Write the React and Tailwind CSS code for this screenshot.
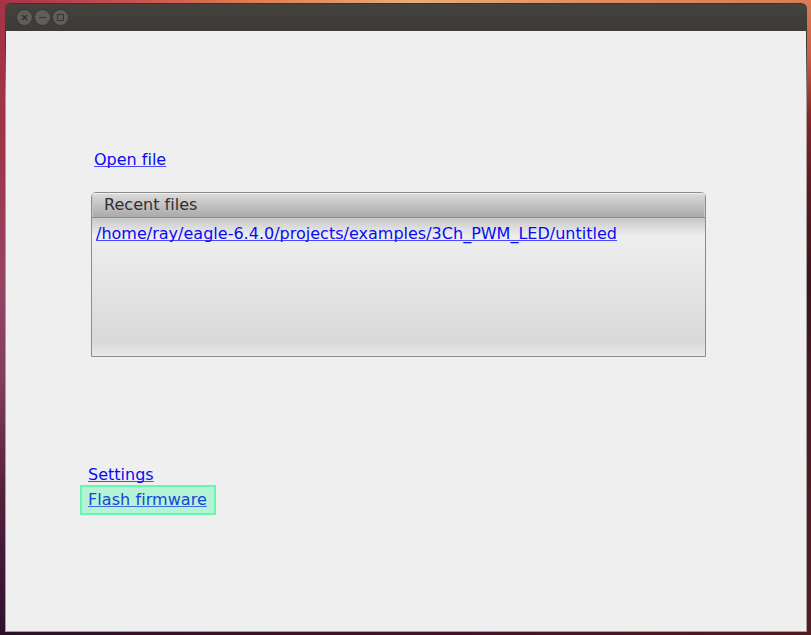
import React from 'react';

const linkBase =
  'block w-fit whitespace-nowrap underline decoration-1 underline-offset-[1px] [text-decoration-skip-ink:none]';
const link = `${linkBase} text-[#0a0af4] decoration-[#4b4bf5]`;

function WindowButton({ children }) {
  return (
    <span className="flex h-[15px] w-[15px] items-center justify-center rounded-full bg-[#5f5e59] shadow-[0_0_0_1px_#3a3934]">
      <svg width="15" height="15" viewBox="0 0 15 15" fill="none" stroke="#363530" strokeWidth="1">
        {children}
      </svg>
    </span>
  );
}

function TitleBar() {
  return (
    <header className="flex h-[28px] shrink-0 items-start gap-[3px] rounded-t-[6px] border-t border-[#35342f] bg-linear-to-b from-[#43423d] to-[#3c3b37] pt-[6px] pl-[12px]">
      <WindowButton>
        <path d="M5 5l5 5M10 5l-5 5" strokeWidth="1.7" />
      </WindowButton>
      <WindowButton>
        <path d="M4 7.5h7" />
      </WindowButton>
      <WindowButton>
        <path d="M4.5 4.5h6v6h-6z" />
      </WindowButton>
    </header>
  );
}

function RecentFiles() {
  return (
    <section className="mt-[21px] ml-[85px] flex h-[165px] w-[615px] flex-col rounded-t-[5px] border border-[#8c8c8c]">
      <h2 className="h-[25px] shrink-0 rounded-t-[4px] border-b border-[#8c8c8c] bg-linear-to-b from-[#dcdcdc] to-[#aaaaaa] pl-[12px] leading-[23px] tracking-[0.03px] text-[#303030] shadow-[inset_0_1px_0_#f0f0f0,inset_1px_0_0_#c8c8c8,inset_-1px_0_0_#c8c8c8]">
        Recent files
      </h2>
      <div className="grow bg-[linear-gradient(to_bottom,#c8c8c8_0%,#eeeeee_13%,#d9d9d9_89%,#e8e8e8_100%)] pt-[6px] pl-[4px]">
        <a className={`${link} tracking-[0.01px]`}>/home/ray/eagle-6.4.0/projects/examples/3Ch_PWM_LED/untitled</a>
      </div>
    </section>
  );
}

export default function App() {
  return (
    <div className="grid h-[635px] w-[811px] grid-cols-[5px_802px_4px] grid-rows-[3px_629px_3px] overflow-hidden bg-[#431820] font-['DejaVu_Sans',sans-serif] text-[16px] leading-[19px] [font-variant-ligatures:none]">
      <div className="col-span-3 bg-[linear-gradient(to_right,#a83248_0%,#c95450_17%,#df7950_30%,#e7ad78_51%,#df8b60_75%,#d97c53_100%)]" />
      <div className="bg-[linear-gradient(to_bottom,#a83248_0%,#9e3445_20%,#964464_45%,#813e5c_60%,#55213f_77%,#30102b_100%)]" />
      <main className="flex flex-col bg-[linear-gradient(to_right,#a13545_0_10px,#d77b52_790px)]">
        <TitleBar />
        <div className="grow bg-[linear-gradient(to_bottom,#3c3b37_0px,#3c3b37_15px,#a5a09e_65px)] px-px pb-px">
          <div className="h-[600px] bg-[#efefef] pt-[119px]">
            <a className={`${link} ml-[88px]`}>Open file</a>
            <div className="h-[2px]" />
            <RecentFiles />
            <a className={`${link} mt-[108px] ml-[82px]`}>Settings</a>
            <div className="mt-px ml-[74px] h-[30px] w-[136px] border-2 border-[#67f8b0] bg-[#b5f2d6] pt-[3px] pl-[6px]">
              <a className={`${linkBase} tracking-[0.07px] text-[#1246d8] decoration-[#3b6bd8]`}>Flash firmware</a>
            </div>
          </div>
        </div>
      </main>
      <div className="bg-[linear-gradient(to_bottom,#d97c53_0%,#c86443_8%,#8b2427_18%,#65191e_28%,#3b141b_45%,#4c1821_60%,#571b25_100%)]" />
      <div className="col-span-3 bg-[linear-gradient(to_right,#2e1029,#42122a_50%,#551820)]" />
    </div>
  );
}
